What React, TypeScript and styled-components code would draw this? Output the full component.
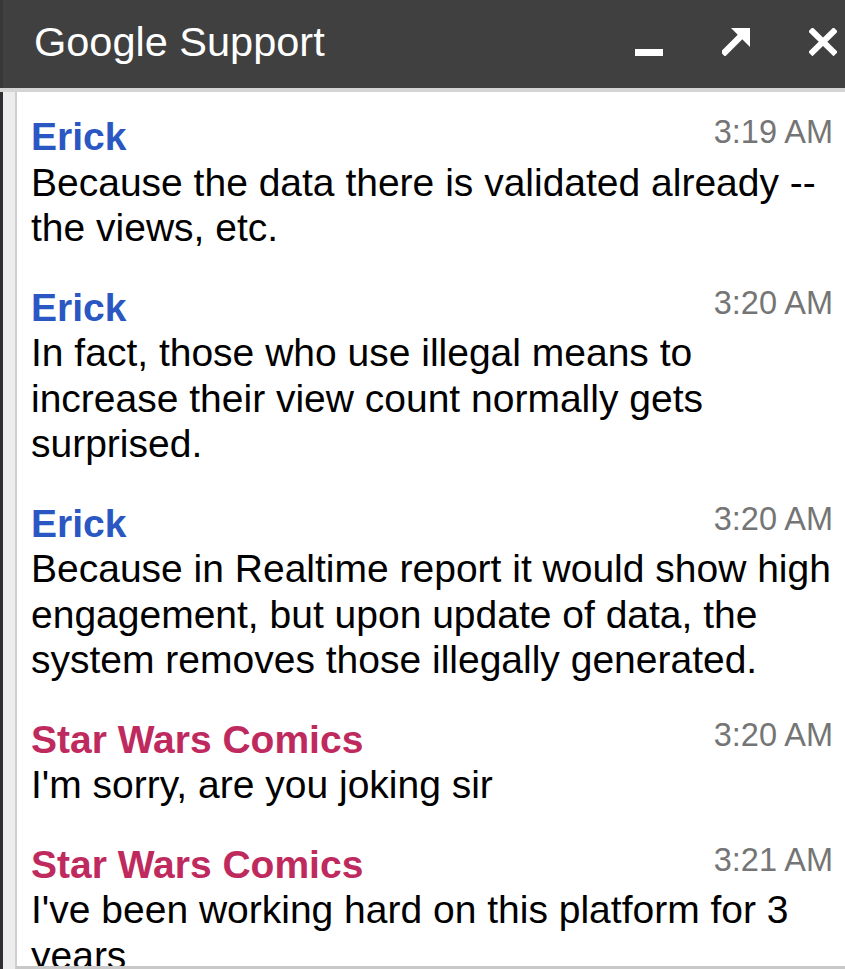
import React from "react";
import styled, { createGlobalStyle } from "styled-components";

const Global = createGlobalStyle`
  html, body { margin: 0; padding: 0; background: #2e2e2e; }
  body { overflow: hidden; font-family: "Liberation Sans", Arial, sans-serif; }
`;

const Window = styled.div`
  width: 845px;
  height: 969px;
  display: flex;
  flex-direction: column;
  background: #353535;
`;

const Header = styled.div`
  height: 88px;
  flex: none;
  display: flex;
  align-items: flex-start;
  background: #404040;
  border-left: 3px solid #383838;
  padding: 0 8px 0 31px;
  box-sizing: border-box;
`;

const Title = styled.div`
  flex: 1;
  color: #ffffff;
  font-size: 41.5px;
  line-height: 46px;
  padding-top: 19px;
`;

const Controls = styled.div`
  display: flex;
  align-items: flex-start;
  gap: 59px;
  padding-top: 28px;
`;

const Icon = styled.svg`
  display: block;
  width: 28px;
  height: 28px;
`;

const Body = styled.div`
  flex: 1;
  display: flex;
  min-height: 0;
  border-top: 4px solid #d4d4d4;
  padding-left: 3px;
  background: #2f2f33;
`;

const Gutter = styled.div`
  width: 12px;
  flex: none;
  background: #ededed;
`;

const Chat = styled.div`
  flex: 1;
  min-width: 0;
  background: #ffffff;
  border-left: 2px solid #cfcfcf;
  border-bottom: 3px solid #c8c8c8;
  overflow: hidden;
  padding: 22px 12px 0 14px;
  display: flex;
  flex-direction: column;
  gap: 34px;
`;

const Message = styled.div`
  display: flex;
  flex-direction: column;
`;

const MetaRow = styled.div`
  display: flex;
  justify-content: space-between;
  align-items: flex-start;
`;

const Name = styled.div<{ $color: string }>`
  color: ${(p) => p.$color};
  font-weight: 700;
  font-size: 39px;
  line-height: 45.5px;
`;

const Time = styled.div`
  color: #757575;
  font-size: 32.5px;
  line-height: 45.5px;
  margin-top: -4px;
`;

const Text = styled.div`
  color: #000000;
  font-size: 39px;
  line-height: 45.5px;
`;

const BLUE = "#2b57c3";
const PINK = "#bf2a5e";

const messages = [
  { name: "Erick", color: BLUE, time: "3:19 AM", text: "Because the data there is validated already -- the views, etc." },
  { name: "Erick", color: BLUE, time: "3:20 AM", text: "In fact, those who use illegal means to increase their view count normally gets surprised." },
  { name: "Erick", color: BLUE, time: "3:20 AM", text: "Because in Realtime report it would show high engagement, but upon update of data, the system removes those illegally generated." },
  { name: "Star Wars Comics", color: PINK, time: "3:20 AM", text: "I'm sorry, are you joking sir" },
  { name: "Star Wars Comics", color: PINK, time: "3:21 AM", text: "I've been working hard on this platform for 3 years" },
];

export default function App() {
  return (
    <>
      <Global />
      <Window>
        <Header>
          <Title>Google Support</Title>
          <Controls>
            <Icon viewBox="0 0 28 28">
              <rect x="0" y="21" width="28" height="8" fill="#fff" />
            </Icon>
            <Icon viewBox="0 0 28 28">
              <polygon points="9,0 28,0 28,19" fill="#fff" />
              <line x1="3" y1="24" x2="19" y2="8" stroke="#fff" strokeWidth="6.5" strokeLinecap="square" />
            </Icon>
            <Icon viewBox="0 0 28 28">
              <line x1="3.5" y1="3.5" x2="24.5" y2="24" stroke="#fff" strokeWidth="6" strokeLinecap="square" />
              <line x1="24.5" y1="3.5" x2="3.5" y2="24" stroke="#fff" strokeWidth="6" strokeLinecap="square" />
            </Icon>
          </Controls>
        </Header>
        <Body>
          <Gutter />
          <Chat>
            {messages.map((m, i) => (
              <Message key={i}>
                <MetaRow>
                  <Name $color={m.color}>{m.name}</Name>
                  <Time>{m.time}</Time>
                </MetaRow>
                <Text>{m.text}</Text>
              </Message>
            ))}
          </Chat>
        </Body>
      </Window>
    </>
  );
}
